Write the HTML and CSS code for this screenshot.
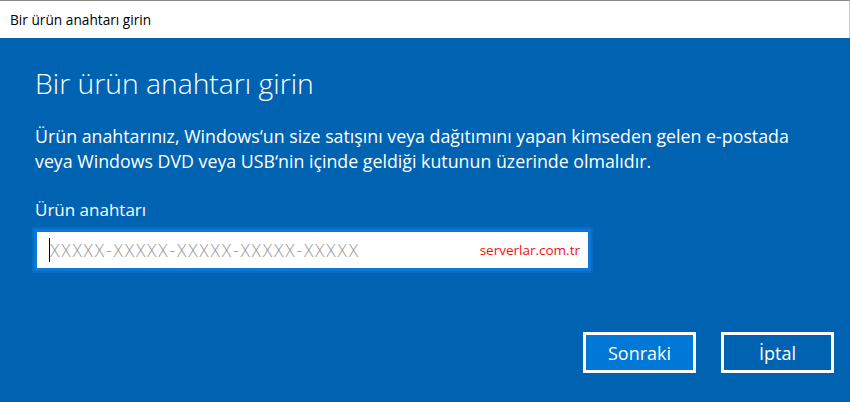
FILE: index.html
```html
<!DOCTYPE html>
<html lang="tr">
<head>
    <meta charset="UTF-8">
    <title>Bir ürün anahtarı girin</title>
    <link rel="stylesheet" href="styles.css">
</head>
<body>

<div class="window">
    <div class="titlebar">Bir ürün anahtarı girin</div>
    <div class="content">
        <h1 class="heading">Bir ürün anahtarı girin</h1>
        <p class="info">Ürün anahtarınız, Windows‘un size satışını veya dağıtımını yapan kimseden gelen e-postada<br>veya Windows DVD veya USB‘nin içinde geldiği kutunun üzerinde olmalıdır.</p>
        <div class="label">Ürün anahtarı</div>
        <div class="keybox">
            <span class="caret"></span>
            <span class="placeholder">XXXXX-XXXXX-XXXXX-XXXXX-XXXXX</span>
            <span class="watermark">serverlar.com.tr</span>
        </div>
        <div class="actions">
            <button class="btn primary">Sonraki</button>
            <button class="btn">İptal</button>
        </div>
    </div>
</div>

</body>
</html>
```

FILE: styles.css
```css
body {
    margin: 0;
    padding: 0;
    font-family: "Open Sans", "Noto Sans", sans-serif;
    background-color: #0063b1;
}

.window {
    width: 850px;
    height: 402px;
    display: flex;
    flex-direction: column;
    overflow: hidden;
}

.titlebar {
    height: 36px;
    padding-top: 1px;
    padding-left: 10px;
    background-color: #fff;
    border-top: 1px solid #8a8a8a;
    border-right: 1px solid #c8c8c8;
    line-height: 36px;
    font-size: 13.7px;
    color: #000;
}

.content {
    flex: 1;
    background-color: #0063b1;
    color: #fff;
    padding: 0 35px;
}

.heading {
    margin: 27px 0 0 0;
    font-size: 28.3px;
    font-weight: 300;
    line-height: 36px;
}

.info {
    margin: 23px 0 0 0;
    font-size: 17.8px;
    line-height: 25px;
}

.label {
    margin-top: 25px;
    font-size: 17px;
    line-height: 22px;
}

.keybox {
    margin-top: 8px;
    margin-left: -1px;
    width: 531px;
    height: 36px;
    border: 3px solid #0a78d4;
    box-shadow: 0 0 0 2px #066cc2;
    background-color: #fff;
    display: flex;
    align-items: center;
    padding: 0 8px 0 12px;
}

.caret {
    width: 1px;
    height: 24px;
    background-color: #000;
}

.placeholder {
    flex: 1;
    color: #9a9a9a;
    font-size: 17.5px;
    font-weight: 300;
    letter-spacing: 1.8px;
}

.watermark {
    color: #f01010;
    font-size: 13.5px;
}

.actions {
    margin-top: 61px;
    margin-right: -35px;
    padding-right: 16px;
    display: flex;
    justify-content: flex-end;
    gap: 25px;
}

.btn {
    width: 113px;
    height: 41px;
    border: 3px solid #fff;
    background-color: #0063b1;
    color: #fff;
    font-family: "Open Sans", "Noto Sans", sans-serif;
    font-size: 18px;
    cursor: pointer;
}

.btn.primary {
    background-color: #0078d7;
}
```
